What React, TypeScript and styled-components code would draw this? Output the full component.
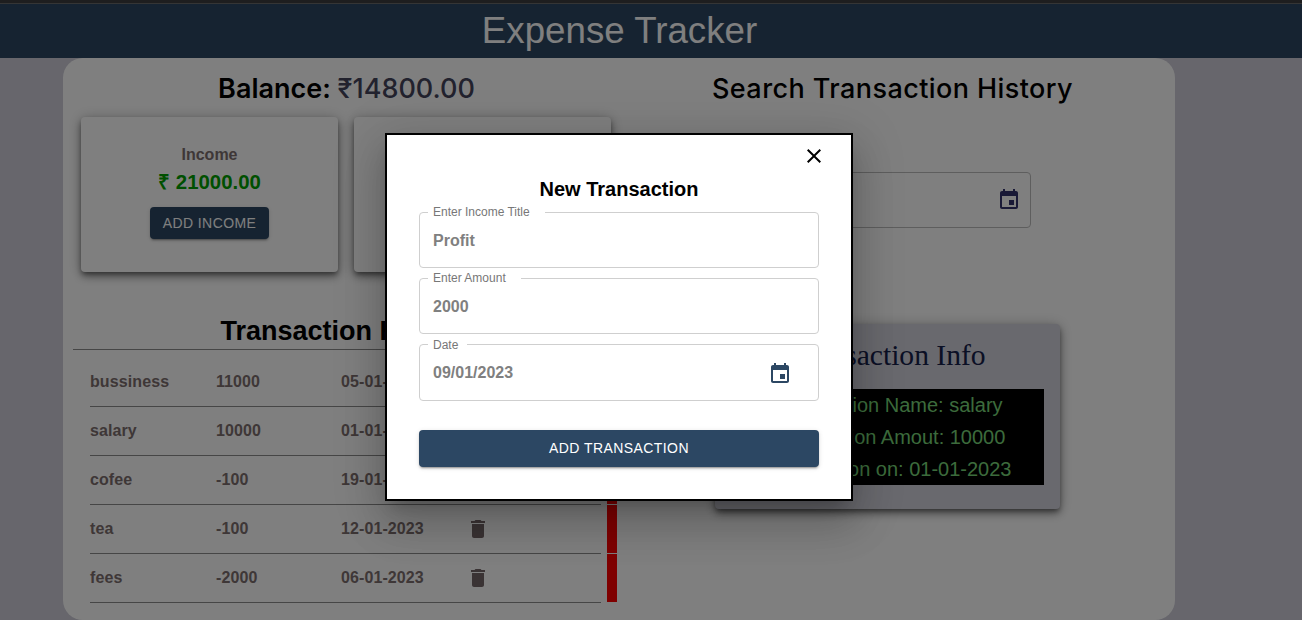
import React from "react";
import styled, { createGlobalStyle } from "styled-components";

const Global = createGlobalStyle`
  html, body { margin: 0; padding: 0; height: 620px; overflow: hidden; background: #cecdd8; }
  * { box-sizing: border-box; }
  body { font-family: "Liberation Sans", Arial, sans-serif; }
`;

const BrowserEdge = styled.div`
  height: 4px;
  background: #3c3c3e;
  border-bottom: 1px solid #6a6a6a;
`;
const Page = styled.div`
  position: relative;
  width: 1302px;
  height: 620px;
  overflow: hidden;
`;
const Header = styled.header`
  height: 54px;
  background: #2c4763;
  color: #fff;
  font-size: 36.7px;
  line-height: 54px;
  text-align: center;
  padding-right: 63px;
`;
const Panel = styled.main`
  width: 1112px;
  height: 562px;
  margin-left: 63px;
  padding: 0 10px;
  background: #fff;
  border-radius: 20px;
  display: grid;
  grid-template-columns: 547px 545px;
  align-items: start;
`;
const Column = styled.section`
  display: flex;
  flex-direction: column;
`;
const Heading = styled.h2<{ $weight: number; $spacing: number }>`
  margin: 13px 0 0;
  height: 34px;
  line-height: 35px;
  font-family: Inter, "Noto Sans", sans-serif;
  font-size: 27px;
  font-weight: ${(p) => p.$weight};
  color: #000;
  text-align: center;
  letter-spacing: ${(p) => p.$spacing}px;
`;
const BalanceValue = styled.span`
  color: #44445c;
  font-weight: 500;
`;
const Cards = styled.div`
  display: grid;
  grid-template-columns: 257px 257px;
  gap: 16px;
  margin: 12px 0 0 8px;
`;
const Card = styled.div`
  height: 155px;
  background: #fff;
  border-radius: 4px;
  box-shadow: 0 3px 5px -1px rgba(0,0,0,.4), 0 5px 8px 0 rgba(0,0,0,.28), 0 1px 14px 0 rgba(0,0,0,.24);
  display: flex;
  flex-direction: column;
  align-items: center;
  padding-top: 28px;
`;
const CardTitle = styled.div`
  font-size: 16px;
  line-height: 19px;
  font-weight: 700;
  color: #7d6e6e;
`;
const CardAmount = styled.div<{ $tone: string }>`
  margin-top: 6px;
  font-size: 20.4px;
  line-height: 24px;
  font-weight: 700;
  color: ${(p) => p.$tone};
`;
const CardButton = styled.button`
  margin-top: 13px;
  height: 32px;
  padding: 0 12.5px;
  border: 0;
  border-radius: 4px;
  background: #2c4763;
  color: #fff;
  font: 400 14px "Liberation Sans", Arial, sans-serif;
  letter-spacing: 0.42px;
  box-shadow: 0 3px 1px -2px rgba(0,0,0,.2), 0 2px 2px 0 rgba(0,0,0,.14), 0 1px 5px 0 rgba(0,0,0,.12);
`;
const HistoryTitle = styled.h2`
  margin: 42px 0 0;
  height: 36px;
  line-height: 35px;
  font-size: 27px;
  font-weight: 700;
  color: #000;
  text-align: center;
  border-bottom: 1px solid #8c8c8c;
`;
const Rows = styled.ul`
  list-style: none;
  margin: 8px 0 0;
  padding: 0 3px 0 17px;
`;
const Row = styled.li`
  display: flex;
  height: 49px;
  gap: 6px;
`;
const RowBody = styled.div`
  flex: 1;
  display: grid;
  grid-template-columns: 126px 125px 125px 24px;
  align-items: center;
  border-bottom: 1px solid #8c8c8c;
  font-size: 16px;
  font-weight: 700;
  letter-spacing: 0.1px;
  color: #7d6e6e;
`;
const RowEdge = styled.div`
  width: 10px;
  background: #ff0000;
  border-bottom: 1px solid #ffffff;
`;
const TrashIcon = styled.svg`
  width: 24px;
  height: 24px;
  fill: #746669;
`;
const SearchBox = styled.div`
  position: relative;
  width: 278px;
  height: 56px;
  margin: 67px 0 0 133px;
  border: 1px solid #bdbdbd;
  border-radius: 4px;
  display: flex;
  align-items: center;
  justify-content: flex-end;
  padding-right: 9px;
`;
const CalendarIcon = styled.svg<{ $tone: string }>`
  width: 24px;
  height: 24px;
  fill: ${(p) => p.$tone};
`;
const InfoCard = styled.div`
  width: 345px;
  height: 185px;
  margin: 96px 0 0 95px;
  padding: 0 16px 0 17px;
  background: #d3d2dc;
  border-radius: 4px;
  box-shadow: 0 3px 5px -1px rgba(0,0,0,.4), 0 5px 8px 0 rgba(0,0,0,.28), 0 1px 14px 0 rgba(0,0,0,.24);
`;
const InfoTitle = styled.h3`
  margin: 0;
  height: 65px;
  line-height: 63px;
  font-family: "Liberation Serif", serif;
  font-size: 29.6px;
  font-weight: 400;
  color: #16204a;
  text-align: center;
`;
const InfoBox = styled.div`
  height: 96px;
  padding-left: 2px;
  background: #000;
  color: #78d678;
  font-size: 20px;
  line-height: 32px;
  text-align: center;
`;
const Overlay = styled.div`
  position: absolute;
  inset: 0;
  background: rgba(0,0,0,.5);
`;
const Modal = styled.div`
  position: absolute;
  left: 385px;
  top: 133px;
  width: 468px;
  height: 368px;
  padding: 0 32px;
  background: #fff;
  border: 2px solid #000;
  box-shadow: 0 11px 15px -7px rgba(0,0,0,.2), 0 24px 38px 3px rgba(0,0,0,.14), 0 9px 46px 8px rgba(0,0,0,.12);
  display: flex;
  flex-direction: column;
`;
const CloseIcon = styled.svg`
  position: absolute;
  right: 25px;
  top: 9px;
  width: 24px;
  height: 24px;
  fill: #000;
`;
const ModalTitle = styled.h2`
  margin: 42px 0 4px;
  height: 24px;
  line-height: 24px;
  font-size: 20px;
  font-weight: 700;
  color: #000;
  text-align: center;
`;
const Field = styled.fieldset`
  height: 63px;
  margin: 0 0 3.33px;
  padding: 0 13px;
  border: 1px solid #cfcfcf;
  border-radius: 4px;
`;
const FieldLabel = styled.legend<{ $tail: number }>`
  margin-left: -5px;
  padding: 0 ${(p) => p.$tail}px 0 5px;
  font-size: 12px;
  line-height: 14px;
  color: #777;
`;
const FieldContent = styled.div`
  height: 48px;
  display: flex;
  align-items: center;
  justify-content: space-between;
`;
const FieldValue = styled.span<{ $lift: number }>`
  font-size: 16px;
  line-height: 18px;
  font-weight: 700;
  color: #808080;
  margin-top: -${(p) => p.$lift}px;
`;
const FieldIcon = styled.span`
  display: flex;
  margin: -4px 13px 0 0;
`;
const SubmitButton = styled.button`
  height: 37px;
  margin-top: 25.67px;
  padding-bottom: 2px;
  border: 0;
  border-radius: 4px;
  background: #2c4763;
  color: #fff;
  font: 400 14px "Liberation Sans", Arial, sans-serif;
  letter-spacing: 0.43px;
  box-shadow: 0 3px 1px -2px rgba(0,0,0,.2), 0 2px 2px 0 rgba(0,0,0,.14), 0 1px 5px 0 rgba(0,0,0,.12);
`;

const eventPath = "M17 12h-5v5h5v-5zM16 1v2H8V1H6v2H5c-1.11 0-1.99.9-1.99 2L3 19c0 1.1.89 2 2 2h14c1.1 0 2-.9 2-2V5c0-1.1-.9-2-2-2h-1V1h-2zm3 18H5V8h14v11z";
const deletePath = "M6 19c0 1.1.9 2 2 2h8c1.1 0 2-.9 2-2V7H6v12zM19 4h-3.5l-1-1h-5l-1 1H5v2h14V4z";
const closePath = "M19 6.41 17.59 5 12 10.59 6.41 5 5 6.41 10.59 12 5 17.59 6.41 19 12 13.41 17.59 19 19 17.59 13.41 12z";

const transactions = [
  ["bussiness", "11000", "05-01-2023"],
  ["salary", "10000", "01-01-2023"],
  ["cofee", "-100", "19-01-2023"],
  ["tea", "-100", "12-01-2023"],
  ["fees", "-2000", "06-01-2023"],
];

export default function App() {
  return (
    <Page>
      <Global />
      <BrowserEdge />
      <Header>Expense Tracker</Header>
      <Panel>
        <Column>
          <Heading $weight={600} $spacing={0}>
            Balance: <BalanceValue>₹14800.00</BalanceValue>
          </Heading>
          <Cards>
            <Card>
              <CardTitle>Income</CardTitle>
              <CardAmount $tone="#00a000">₹ 21000.00</CardAmount>
              <CardButton>ADD INCOME</CardButton>
            </Card>
            <Card>
              <CardTitle>Expense</CardTitle>
              <CardAmount $tone="#e00000">₹ 6200.00</CardAmount>
              <CardButton>ADD EXPENSE</CardButton>
            </Card>
          </Cards>
          <HistoryTitle>Transaction History</HistoryTitle>
          <Rows>
            {transactions.map(([name, amount, date]) => (
              <Row key={name}>
                <RowBody>
                  <span>{name}</span>
                  <span>{amount}</span>
                  <span>{date}</span>
                  <TrashIcon viewBox="0 0 24 24"><path d={deletePath} /></TrashIcon>
                </RowBody>
                <RowEdge />
              </Row>
            ))}
          </Rows>
        </Column>
        <Column>
          <Heading $weight={500} $spacing={0.42}>Search Transaction History</Heading>
          <SearchBox>
            <CalendarIcon $tone="#33336e" viewBox="0 0 24 24"><path d={eventPath} /></CalendarIcon>
          </SearchBox>
          <InfoCard>
            <InfoTitle>Transaction Info</InfoTitle>
            <InfoBox>
              Transaction Name: salary<br />
              Transaction Amout: 10000<br />
              Transaction on: 01-01-2023
            </InfoBox>
          </InfoCard>
        </Column>
      </Panel>
      <Overlay />
      <Modal>
        <CloseIcon viewBox="0 0 24 24"><path d={closePath} /></CloseIcon>
        <ModalTitle>New Transaction</ModalTitle>
        <Field>
          <FieldLabel $tail={15}>Enter Income Title</FieldLabel>
          <FieldContent><FieldValue $lift={5}>Profit</FieldValue></FieldContent>
        </Field>
        <Field>
          <FieldLabel $tail={15}>Enter Amount</FieldLabel>
          <FieldContent><FieldValue $lift={5}>2000</FieldValue></FieldContent>
        </Field>
        <Field>
          <FieldLabel $tail={9}>Date</FieldLabel>
          <FieldContent>
            <FieldValue $lift={6}>09/01/2023</FieldValue>
            <FieldIcon>
              <CalendarIcon $tone="#2c4763" viewBox="0 0 24 24"><path d={eventPath} /></CalendarIcon>
            </FieldIcon>
          </FieldContent>
        </Field>
        <SubmitButton>ADD TRANSACTION</SubmitButton>
      </Modal>
    </Page>
  );
}
